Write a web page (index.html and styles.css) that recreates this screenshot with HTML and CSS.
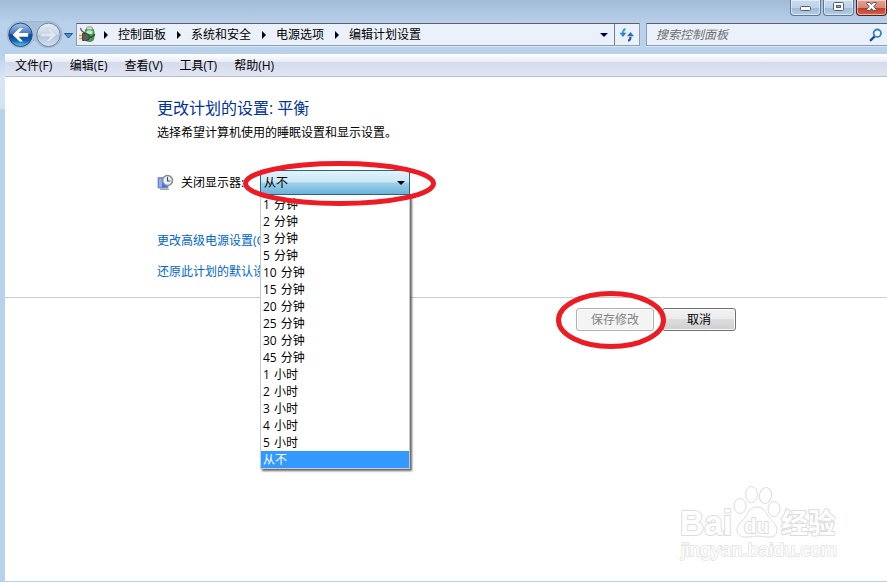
FILE: index.html
```html
<!DOCTYPE html>
<html lang="zh-CN">
<head>
    <meta charset="UTF-8">
    <title>编辑计划设置</title>
    <link rel="stylesheet" href="styles.css">
</head>
<body>
    <div class="window">
        <div class="window-buttons">
            <button class="win-btn">
                <svg width="12" height="10"><rect x="0.5" y="4.5" width="10" height="4" rx="1" fill="#fff" stroke="#53606f"/></svg>
            </button>
            <button class="win-btn">
                <svg width="12" height="10"><rect x="0.5" y="0.5" width="10" height="8" rx="1" fill="#fff" stroke="#53606f"/><rect x="3.5" y="3.5" width="4" height="2" fill="#8fb0d2" stroke="#53606f"/></svg>
            </button>
            <button class="win-btn close">
                <svg width="12" height="10"><path d="M0.8 0.5h3l1.7 2 1.7-2h3v1.3L7.7 4.5l2.5 2.7v1.3h-3l-1.7-2-1.7 2h-3V7.2l2.5-2.7L0.8 1.8z" fill="#fff" stroke="#5b4650" stroke-width="0.9"/></svg>
            </button>
        </div>

        <div class="toolbar">
            <svg class="nav" width="70" height="30" viewBox="0 0 70 30">
                <defs>
                    <linearGradient id="back" x1="0" y1="0" x2="0" y2="1">
                        <stop offset="0" stop-color="#a9c6ea"/>
                        <stop offset="0.45" stop-color="#3f76c1"/>
                        <stop offset="0.5" stop-color="#0d3f96"/>
                        <stop offset="0.75" stop-color="#1463b8"/>
                        <stop offset="1" stop-color="#5cd0f7"/>
                    </linearGradient>
                    <linearGradient id="fwd" x1="0" y1="0" x2="0" y2="1">
                        <stop offset="0" stop-color="#e3ebf4"/>
                        <stop offset="0.48" stop-color="#ccd9e8"/>
                        <stop offset="0.52" stop-color="#b3c5da"/>
                        <stop offset="1" stop-color="#d4e1ef"/>
                    </linearGradient>
                </defs>
                <path d="M13 1.5h29a13 13 0 0 1 0 26a13 13 0 0 1-12-6q-2.500-3-5 0a13 13 0 0 1-12 6a13 13 0 0 1 0-26z" fill="#9fb6d0" stroke="#8ba5c2" opacity="0.6"/>
                <circle cx="13.500" cy="14.800" r="11.700" fill="url(#back)" stroke="#2c4976"/>
                <path d="M5.500 14.800l7.200-6.500h3.300l-4.300 4.800h9.500v3.600h-9.500l4.300 4.800h-3.300z" fill="#fff"/>
                <circle cx="41.500" cy="14.800" r="11.700" fill="url(#fwd)" stroke="#71859c"/>
                <path d="M49.500 14.800l-7.200-6.500h-3.300l4.300 4.800h-9.500v3.600h9.500l-4.300 4.800h3.300z" fill="#dfe8f2" stroke="#b9c8d9" stroke-width="0.6"/>
                <path d="M57.500 13.500h8l-4 4.500z" fill="#3d9bd6" stroke="#234f86"/>
            </svg>

            <div class="address">
                <svg class="power-icon" width="18" height="18" viewBox="0 0 18 18">
                    <rect x="6" y="2" width="9" height="13.500" rx="4" fill="#2fae3e" stroke="#5f8468"/>
                    <rect x="7.500" y="0.800" width="6" height="3" rx="1.500" fill="#d4dcd6" stroke="#7c8780" stroke-width="0.700"/>
                    <path d="M7.500 5q3-1.500 6 0v3h-6z" fill="#b6eeb4"/>
                    <path d="M1.500 2q1 4 5 5" fill="none" stroke="#555" stroke-width="1.200"/>
                    <path d="M0 9.500h4M0 12.500h4" stroke="#e3a51e" stroke-width="1.600"/>
                    <path d="M3.500 7.500h3.500a3.500 3.500 0 0 1 0 7H3.500z" fill="#5a5d5e" stroke="#222" stroke-width="0.700"/>
                    <path d="M10 11q4 1 5.500-3" fill="none" stroke="#444" stroke-width="1.800"/>
                </svg>
                <span class="sep"></span>
                <span>控制面板</span>
                <span class="sep"></span>
                <span>系统和安全</span>
                <span class="sep"></span>
                <span>电源选项</span>
                <span class="sep"></span>
                <span>编辑计划设置</span>
                <span class="address-arrow"></span>
                <span class="refresh">
                    <svg width="16" height="16" viewBox="0 0 16 16">
                        <path d="M6.500 2q-2.500 0.500-2.500 4" fill="none" stroke="#3ba3dc" stroke-width="2"/>
                        <path d="M0.500 5.800h7L4 10z" fill="#2b86cd"/>
                        <path d="M9 13.800q2.500-0.500 2.500-4" fill="none" stroke="#224f9c" stroke-width="2"/>
                        <path d="M8 9.200h7L11.500 5z" fill="#2c6fbd"/>
                    </svg>
                </span>
            </div>

            <div class="search">
                <span>搜索控制面板</span>
                <svg width="14" height="14" viewBox="0 0 14 14">
                    <path d="M6 8L1.800 12.200" stroke="#1f4795" stroke-width="2.400" stroke-linecap="round"/>
                    <circle cx="8.300" cy="5.200" r="3.700" fill="#f2f8fd" stroke="#3681c9" stroke-width="1.800"/>
                </svg>
            </div>
        </div>

        <div class="menu">
            <span>文件(F)</span>
            <span>编辑(E)</span>
            <span>查看(V)</span>
            <span>工具(T)</span>
            <span>帮助(H)</span>
        </div>

        <div class="content">
            <div class="plan">
                <h1>更改计划的设置: 平衡</h1>
                <p>选择希望计算机使用的睡眠设置和显示设置。</p>

                <div class="setting">
                    <svg width="17" height="17" viewBox="0 0 17 17">
                        <path d="M1 3.500h10v10.500H1z" fill="#4a6ee0" stroke="#8b9bc4"/>
                        <path d="M2 4.500h3v8.500H2z" fill="#91aaf4"/>
                        <path d="M3 15.200h9" stroke="#8e949c" stroke-width="1.200"/>
                        <circle cx="10.500" cy="6.500" r="5" fill="#eef2f5" stroke="#838b92" stroke-width="1.600"/>
                        <path d="M10.500 3v4h3" fill="none" stroke="#3b4e60" stroke-width="1.100"/>
                    </svg>
                    <label>关闭显示器:</label>
                    <div class="select">
                        <span>从不</span>
                        <i class="caret"></i>
                        <ul class="options">
                            <li>1 分钟</li>
                            <li>2 分钟</li>
                            <li>3 分钟</li>
                            <li>5 分钟</li>
                            <li>10 分钟</li>
                            <li>15 分钟</li>
                            <li>20 分钟</li>
                            <li>25 分钟</li>
                            <li>30 分钟</li>
                            <li>45 分钟</li>
                            <li>1 小时</li>
                            <li>2 小时</li>
                            <li>3 小时</li>
                            <li>4 小时</li>
                            <li>5 小时</li>
                            <li class="selected">从不</li>
                        </ul>
                    </div>
                </div>

                <a class="link">更改高级电源设置(C)</a>
                <a class="link">还原此计划的默认设置</a>
            </div>

            <div class="actions">
                <button class="btn disabled" disabled>保存修改</button>
                <button class="btn">取消</button>
            </div>
        </div>

        <!-- red marker ellipses -->
        <svg class="marks" width="887" height="582">
            <ellipse cx="339.500" cy="183.500" rx="94" ry="20"/>
            <ellipse cx="611" cy="320" rx="52.500" ry="26.500"/>
        </svg>

        <svg class="watermark" width="170" height="84" viewBox="0 0 170 84">
            <text class="wm-big" x="5" y="55" textLength="52" lengthAdjust="spacingAndGlyphs">Bai</text>
            <ellipse cx="65" cy="26" rx="6" ry="7.500"/>
            <ellipse cx="76.500" cy="14.500" rx="6" ry="8"/>
            <ellipse cx="90.500" cy="15.500" rx="6" ry="8" transform="rotate(10 90.500 15.500)"/>
            <ellipse cx="99" cy="29" rx="6" ry="7.500"/>
            <path d="M82 27c6 0 8 4 11 9s9 8 9 14-4 7-9 7-8-1-11-1-6 1-11 1-9-2-9-7c0-6 6-9 9-14s5-9 11-9z"/>
            <text class="wm-du" x="69" y="53" textLength="25" lengthAdjust="spacingAndGlyphs">du</text>
            <text class="wm-cn" x="106" y="53">经验</text>
            <text class="wm-url" x="6" y="76" textLength="156" lengthAdjust="spacingAndGlyphs">jingyan.baidu.com</text>
        </svg>
    </div>
</body>
</html>
```

FILE: styles.css
```css
* {
    box-sizing: border-box;
}
body {
    margin: 0;
    font-family: "Open Sans", "Noto Sans CJK SC", sans-serif;
    font-size: 12px;
    line-height: 16px;
    color: #000;
}
.window {
    position: relative;
    display: flex;
    flex-direction: column;
    width: 887px;
    height: 582px;
    padding: 0 0 1px 5px;
    overflow: hidden;
    background: linear-gradient(#a2bbd7 0, #b9d1eb 24px, #b9d1eb 55px, #d8e6f5 77px, #d3e3f3 108px, #b9d1eb 110px);
}
.window-buttons {
    display: flex;
    justify-content: flex-end;
    gap: 2px;
    height: 16px;
}
.win-btn {
    display: flex;
    justify-content: center;
    align-items: center;
    width: 31px;
    height: 16px;
    padding: 0;
    border: 1px solid #62788f;
    border-top: none;
    border-radius: 0 0 4px 4px;
    background: linear-gradient(#c9dbed 0, #bdd2e8 8px, #9cb9d6 8px, #b4cfe9 100%);
    box-shadow: inset 0 0 0 1px rgba(255,255,255,0.5);
}
.win-btn svg {
    margin-bottom: 1px;
}
.win-btn.close {
    border-color: #4d1f2b;
    background: linear-gradient(#e3a496 0, #d78573 8px, #bd3d23 8px, #d4674a 100%);
}

/* navigation row */
.toolbar {
    display: flex;
    height: 38px;
    padding: 4px 0 0 2px;
}
.nav {
    flex: none;
}
.address {
    display: flex;
    align-items: center;
    flex: none;
    width: 564px;
    height: 23px;
    margin: 3px 6px 0 -1px;
    padding-left: 2px;
    border: 1px solid #8d9db0;
    border-top-color: #59636f;
    background: #eaf1fa;
    box-shadow: 0 1px 0 #d9e6f4;
    white-space: nowrap;
}
.power-icon {
    flex: none;
    margin-right: -4px;
}
.sep {
    width: 25px;
    height: 8px;
}
.sep::before {
    content: "";
    display: block;
    width: 0;
    margin-left: 11px;
    border: 4px solid transparent;
    border-left-color: #000;
    border-right: none;
}
.address-arrow {
    margin-left: auto;
    margin-right: 6px;
    border: 4px solid transparent;
    border-top-color: #00004a;
    border-bottom: none;
}
.refresh {
    display: flex;
    align-items: center;
    justify-content: center;
    width: 25px;
    height: 21px;
    border-left: 1px solid #6e7d8f;
}
.search {
    display: flex;
    align-items: center;
    justify-content: space-between;
    flex: 1;
    height: 23px;
    margin-top: 3px;
    padding: 0 4px 0 9px;
    border: 1px solid #8d9db0;
    border-top-color: #59636f;
    border-right: none;
    background: #eaf1fa;
    box-shadow: 0 1px 0 #d9e6f4;
    font-style: italic;
    color: #6d6d6d;
}

.menu {
    display: flex;
    flex: none;
    align-items: center;
    height: 23px;
    padding: 2px 0 0 10px;
    background: linear-gradient(#fff 0, #e7ecf6 8px, #d5daec 8px, #e1e6f4 100%);
    border-bottom: 1px solid #b2bed1;
}
.menu span {
    width: 54.8px;
}

.content {
    flex: 1;
    background: #fff;
}
.plan {
    height: 221px;
    padding: 19px 0 0 152px;
    border-bottom: 1px solid #cccccc;
}
h1 {
    margin: 0;
    font-size: 16px;
    font-weight: normal;
    line-height: 24px;
    color: #003399;
}
p {
    margin: 5px 0 0;
}
.setting {
    display: flex;
    align-items: center;
    height: 25px;
    margin: 29px 0 38px;
}
.setting label {
    width: 79px;
    margin-left: 7px;
}
.select {
    position: relative;
    display: flex;
    align-items: center;
    justify-content: space-between;
    width: 150px;
    height: 25px;
    padding: 0 4px 0 3px;
    border: 1px solid #2c628b;
    background: linear-gradient(#e3f3fb 0, #c9e6f5 11px, #a0cfe9 12px, #68b3db 100%);
}
.caret {
    border: 4px solid transparent;
    border-top-color: #000;
    border-bottom: none;
}
.options {
    position: absolute;
    top: 24px;
    left: -1px;
    width: 150px;
    margin: 0;
    padding: 1px 0 0;
    list-style: none;
    word-spacing: 1px;
    background: #fff;
    border: 1px solid #c4c9dc;
    border-top: none;
    box-shadow: 2px 2px 2px rgba(0,0,0,0.6);
}
.options li {
    height: 17px;
    padding-left: 2px;
    line-height: 17px;
}
.options .selected {
    background: #3399ff;
    color: #fff;
}
.link {
    display: block;
    margin-bottom: 15px;
    color: #0066cc;
}

.actions {
    display: flex;
    gap: 8px;
    padding: 10px 0 0 571px;
}
.btn {
    width: 78px;
    height: 23px;
    padding: 0;
    border: 1px solid #707070;
    border-radius: 3px;
    background: linear-gradient(#f2f2f2 0, #ebebeb 50%, #dddddd 50%, #cfcfcf 100%);
    box-shadow: inset 0 0 0 1px #fafafa;
    font: inherit;
    color: #000;
}
.btn + .btn {
    width: 74px;
}
.btn.disabled {
    border-color: #adb2b5;
    background: #f4f4f4;
    color: #838383;
}

.marks {
    position: absolute;
    top: 0;
    left: 0;
    fill: none;
    stroke: #ed1c24;
    stroke-width: 5px;
}
.watermark {
    position: absolute;
    left: 675px;
    top: 480px;
    fill: #fff;
    stroke: #dcdcdc;
    stroke-width: 1px;
}
.watermark text {
    font-family: "Liberation Sans", "Noto Sans CJK SC", sans-serif;
    font-weight: bold;
    paint-order: stroke;
    stroke-width: 2px;
}
.wm-big {
    font-size: 35px;
}
.wm-du {
    font-size: 21px;
}
.wm-cn {
    font-size: 27px;
}
.watermark .wm-url {
    font-size: 18px;
    font-weight: normal;
    stroke: #e2e2e2;
    stroke-width: 1.6px;
}
```
